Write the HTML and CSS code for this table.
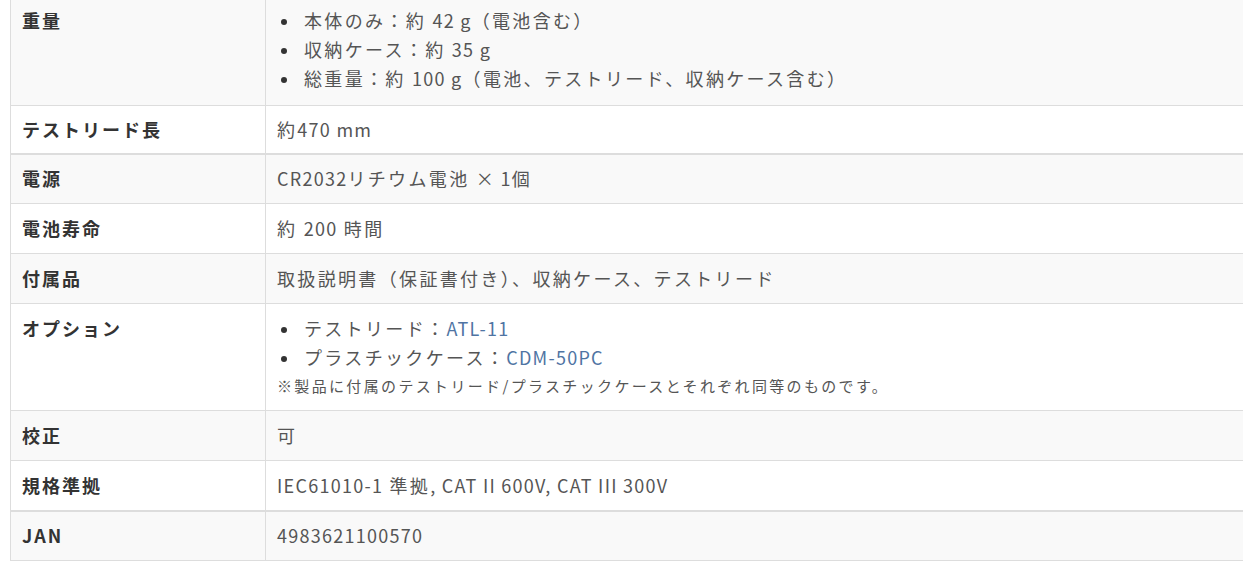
FILE: index.html
```html
<!DOCTYPE html>
<html lang="ja">
<head>
<meta charset="utf-8">
<title>仕様</title>
<link rel="stylesheet" href="styles.css">
</head>
<body>
<table class="spec">
  <tbody>
    <tr class="odd first">
      <th>重量</th>
      <td>
        <ul class="bullets">
          <li>本体のみ：約 <span class="lat">42 g</span>（電池含む）</li>
          <li>収納ケース：約 <span class="lat">35 g</span></li>
          <li>総重量：約 <span class="lat">100 g</span>（電池、テストリード、収納ケース含む）</li>
        </ul>
      </td>
    </tr>
    <tr class="second">
      <th>テストリード長</th>
      <td>約<span class="lat">470 mm</span></td>
    </tr>
    <tr class="odd thick">
      <th>電源</th>
      <td><span class="lat">CR2032</span>リチウム電池 <span class="lat">× 1</span>個</td>
    </tr>
    <tr>
      <th>電池寿命</th>
      <td>約 <span class="lat">200</span> 時間</td>
    </tr>
    <tr class="odd">
      <th>付属品</th>
      <td>取扱説明書（保証書付き）、収納ケース、テストリード</td>
    </tr>
    <tr>
      <th>オプション</th>
      <td>
        <ul class="bullets">
          <li>テストリード：<a class="lat" href="#">ATL-11</a></li>
          <li>プラスチックケース：<a class="lat" href="#">CDM-50PC</a></li>
        </ul>
        <p class="note">※製品に付属のテストリード/プラスチックケースとそれぞれ同等のものです。</p>
      </td>
    </tr>
    <tr class="odd">
      <th>校正</th>
      <td>可</td>
    </tr>
    <tr>
      <th>規格準拠</th>
      <td><span class="lat">IEC61010-1</span> 準拠<span class="lat">, CAT II 600V, CAT III 300V</span></td>
    </tr>
    <tr class="odd thick">
      <th>JAN</th>
      <td><span class="lat">4983621100570</span></td>
    </tr>
  </tbody>
</table>
</body>
</html>
```

FILE: styles.css
```css
html, body {
  margin: 0;
  padding: 0;
  background: #ffffff;
  overflow: hidden;
}

body {
  font-family: "Noto Sans CJK JP", "Noto Sans", sans-serif;
  font-size: 18px;
  letter-spacing: 0.13em;
  color: #555555;
}

.lat {
  letter-spacing: 0.07em;
}

.spec {
  border-collapse: collapse;
  width: 1280px;
  margin: -5px 0 0 10px;
  table-layout: fixed;
}

.spec th,
.spec td {
  border: 1px solid #dddddd;
  padding: 10px 11px;
  line-height: 29px;
  vertical-align: top;
  text-align: left;
}

.spec th {
  width: 232px;
  font-weight: 700;
  color: #333333;
  letter-spacing: 0.11em;
}

.spec tr.first th,
.spec tr.first td {
  padding-bottom: 12px;
}

.spec tr.second th,
.spec tr.second td {
  padding-top: 9px;
  padding-bottom: 9px;
}

.spec tr.odd th,
.spec tr.odd td {
  background: #f9f9f9;
}

.spec tr.thick th,
.spec tr.thick td {
  border-top: 2px solid #dddddd;
  padding-top: 9px;
}

.bullets {
  list-style: none;
  margin: 0;
  padding: 0;
}

.bullets li::before {
  content: "";
  display: inline-block;
  vertical-align: middle;
  width: 6px;
  height: 6px;
  border-radius: 50%;
  background: #333333;
  margin: -2px 17px 0 4px;
}

.bullets a {
  color: #4f74a3;
  text-decoration: none;
}

.note {
  margin: 0;
  font-size: 15px;
  line-height: 28px;
}
```
